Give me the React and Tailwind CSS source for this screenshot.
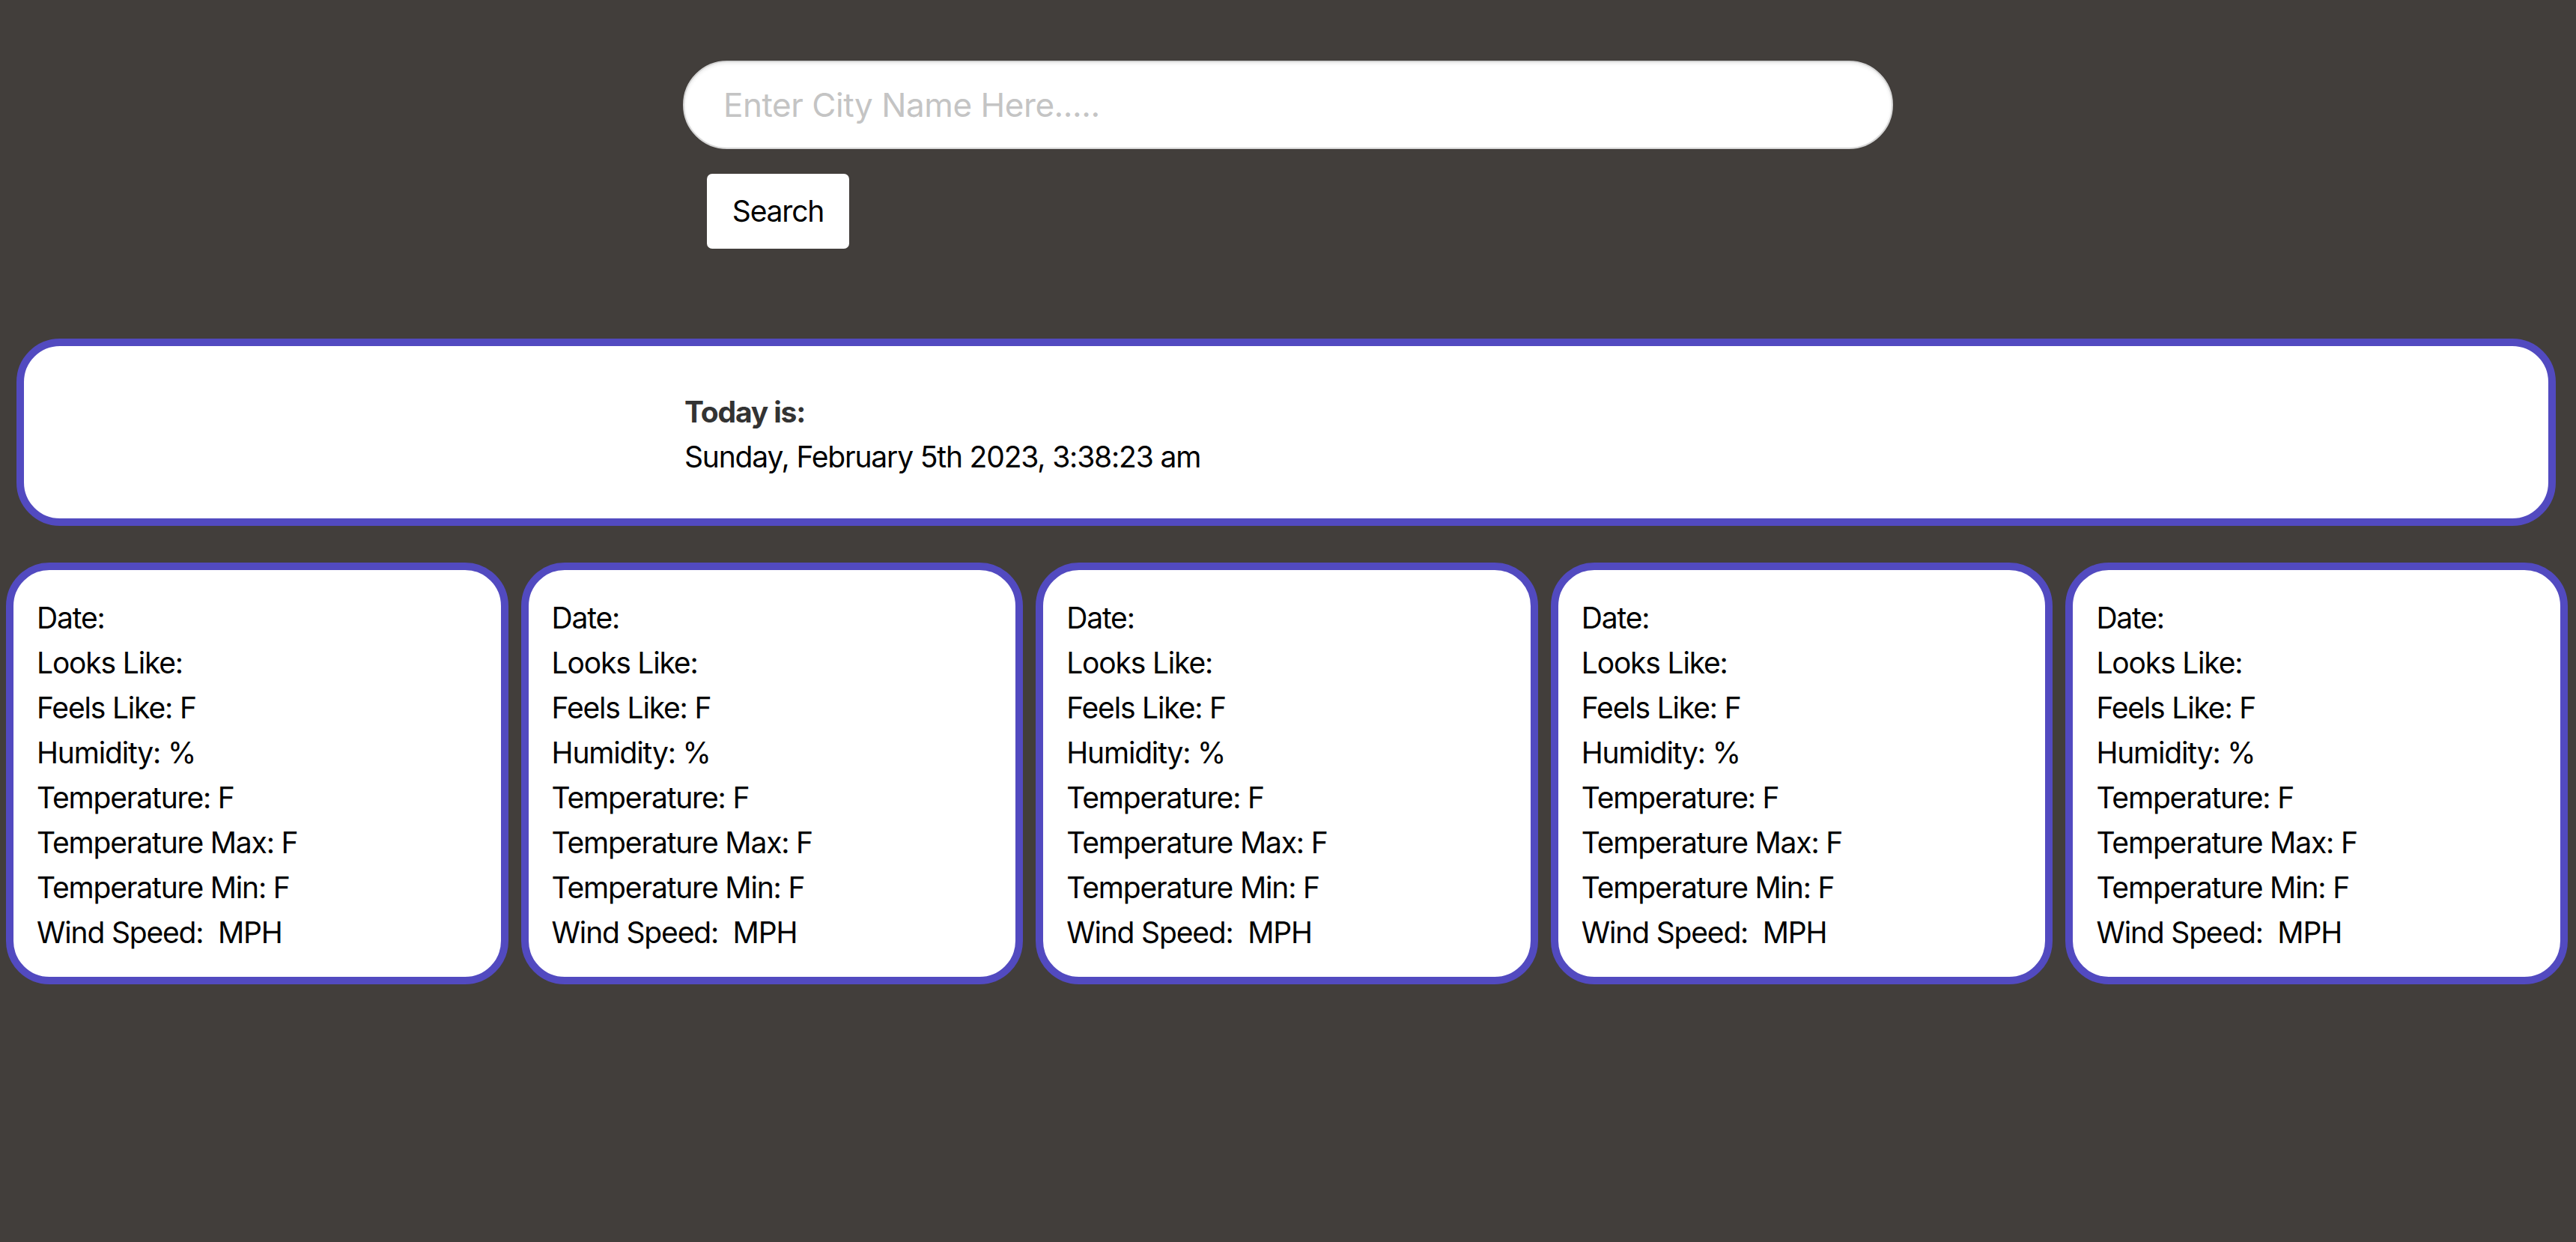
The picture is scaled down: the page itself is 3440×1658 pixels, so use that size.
const forecastRows = [
  "Date:",
  "Looks Like:",
  "Feels Like: F",
  "Humidity: %",
  "Temperature: F",
  "Temperature Max: F",
  "Temperature Min: F",
  "Wind Speed:\u00a0 MPH",
];

const ForecastCard = () => (
  <div className="flex-1 rounded-[58px] border-[10px] border-[#524ac0] bg-white pb-[29px] pl-[31px] pr-4 pt-[34px]">
    {forecastRows.map((row) => (
      <p key={row} className="text-[39px] leading-[60px] tracking-[-0.03em] text-black">
        {row}
      </p>
    ))}
  </div>
);

const App = () => {
  return (
    <div className="min-h-[1658px] w-full bg-[#423e3b] font-['Inter',sans-serif]">
      <div className="flex flex-col items-center pt-[81px]">
        <div className="w-[1616px]">
          <input
            type="text"
            placeholder="Enter City Name Here....."
            className="h-[118px] w-full rounded-full border-2 border-[#d6d6d6] bg-white pl-[52px] text-[44px] tracking-[-0.01em] text-black shadow-[inset_0_2px_4px_rgba(0,0,0,0.08)] outline-none placeholder:text-[#c4c4c4]"
          />
          <button
            type="button"
            className="ml-[32px] mt-[33px] h-[100px] w-[190px] rounded-[7px] bg-white text-[39px] tracking-[-0.03em] text-black"
          >
            Search
          </button>
        </div>
      </div>

      <section className="ml-[22px] mr-[27px] mt-[120px] rounded-[58px] border-[10px] border-[#524ac0] bg-white pb-[52px] pl-[882px] pt-[58px]">
        <p className="text-[39px] font-bold leading-[60px] tracking-[-0.03em] text-[#333333]">
          Today is:
        </p>
        <p className="text-[39px] leading-[60px] tracking-[-0.03em] text-black">
          Sunday, February 5th 2023, 3:38:23 am
        </p>
      </section>

      <div className="mt-[49px] flex gap-[17px] pl-[8px] pr-[11px]">
        {Array.from({ length: 5 }).map((_, index) => (
          <ForecastCard key={index} />
        ))}
      </div>
    </div>
  );
};

export default App;
